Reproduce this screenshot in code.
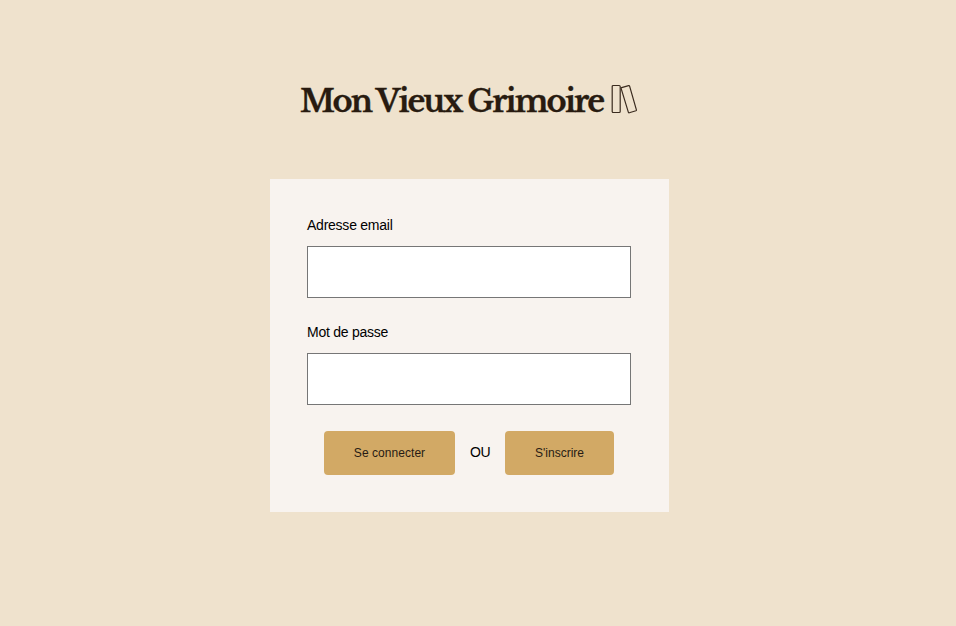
<main>
  <h1 class="logo">
    <span class="name">Mon Vieux Grimoire</span>
    <svg width="27" height="30" viewBox="0 0 27 30" fill="none" stroke="#3a2b1f" stroke-width="1.2" aria-hidden="true">
      <rect x="1.2" y="1.5" width="8" height="27" rx="1" />
      <path d="M10.6 3.6 L17.6 1.6 Q18.4 1.4 18.6 2.1 L25.4 25.8 Q25.6 26.5 24.9 26.8 L18.3 28.8 Q17.6 29 17.4 28.3 L10.1 4.4 Q9.9 3.8 10.6 3.6Z" />
    </svg>
  </h1>
  <form>
    <label for="email">Adresse email</label>
    <input id="email" type="text" />
    <label for="password">Mot de passe</label>
    <input id="password" type="password" />
    <div class="actions">
      <button class="login" type="button">Se connecter</button>
      <span class="or">OU</span>
      <button type="button">S'inscrire</button>
    </div>
  </form>
</main>

<style>
  :global(body) { background: #efe2cd; }
  main {
    box-sizing: border-box;
    min-height: 626px;
    padding: 84px 0 0 270px;
    font-family: "Liberation Sans", Arial, sans-serif;
    font-size: 14px;
    color: #000;
  }
  .logo {
    display: flex;
    height: 30px;
    margin: 0 0 65px 30px;
    gap: 7px;
    color: #281b10;
  }
  .name {
    width: 304px;
    font: 700 30.5px/34px "Libre Baskerville", "Liberation Serif", "Times New Roman", serif;
    letter-spacing: -1.82px;
    -webkit-text-stroke: 0.3px #281b10;
    white-space: nowrap;
  }
  form {
    box-sizing: border-box;
    display: flex;
    flex-direction: column;
    width: 399px;
    height: 333px;
    padding: 38px 38px 37px 37px;
    background: #f8f3ef;
  }
  label {
    height: 16px;
    line-height: 16px;
    margin-bottom: 13px;
    letter-spacing: -0.24px;
  }
  input {
    box-sizing: border-box;
    width: 324px;
    height: 52px;
    margin: 0 0 26px;
    border: 1px solid #767676;
    border-radius: 0;
    background: #fff;
  }
  .actions { display: flex; align-items: center; justify-content: center; gap: 15px; }
  .or { width: 20px; padding-bottom: 2px; letter-spacing: -0.3px; }
  button {
    width: 109px;
    height: 44px;
    padding: 0;
    border: 0;
    border-radius: 4px;
    background: #d2a965;
    color: #281b14;
    font: 12px "Liberation Sans", Arial, sans-serif;
  }
  .login { width: 131px; letter-spacing: 0.05px; }
</style>
